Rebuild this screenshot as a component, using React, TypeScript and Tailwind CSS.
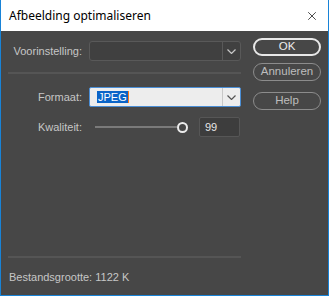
import { X } from 'lucide-react';

function Chevron({ color }: { color: string }) {
  return (
    <svg width="9" height="5" viewBox="0 0 9 5" fill="none">
      <path d="M0.5 0.5 L4.5 4.5 L8.5 0.5" stroke={color} strokeWidth="1.2" />
    </svg>
  );
}

function PillButton({ label, primary }: { label: string; primary?: boolean }) {
  return (
    <button
      className={
        primary
          ? 'w-[68px] h-[18px] rounded-[9px] border-2 border-[#e8e8e8] text-[#ececec] text-[11.5px] leading-none flex items-center justify-center'
          : 'w-[68px] h-[18px] rounded-[9px] border border-[#8c8c8c] text-[#bdbdbd] text-[11.5px] leading-none flex items-center justify-center'
      }
    >
      {label}
    </button>
  );
}

export default function App() {
  return (
    <div className="w-[329px] h-[296px] flex flex-col border-x border-b border-[#1883d7] bg-[#474747] font-['Liberation_Sans',sans-serif] text-[11px] text-[#c6c6c6]">
      {/* Titelbalk */}
      <div className="h-[31px] bg-white flex items-center justify-between pl-[8px] pr-[9px]">
        <span className="font-['Noto_Sans',sans-serif] text-[12px] text-black">Afbeelding optimaliseren</span>
        <X size={14} strokeWidth={1.2} className="text-black" />
      </div>

      {/* Inhoud */}
      <div className="flex-1 flex pl-[7px]">
        <div className="w-[233px] flex flex-col pt-[10px] pb-[10px]">
          <div className="flex items-center h-[20px]">
            <span className="w-[74px] text-right">Voorinstelling:</span>
            <div className="ml-[7px] flex-1 h-[20px] flex rounded-[3px] border border-[#595959] bg-[#404040]">
              <div className="flex-1" />
              <div className="w-[18px] border-l border-[#595959] flex items-center justify-center">
                <Chevron color="#c8c8c8" />
              </div>
            </div>
          </div>

          <div className="mt-[11px] h-[2px] bg-[#555555]" />

          <div className="mt-[13px] flex items-center h-[20px]">
            <span className="w-[74px] text-right">Formaat:</span>
            <div className="ml-[7px] flex-1 h-[20px] flex rounded-[2px] border border-[#4a8ed6] bg-[#ededed]">
              <div className="flex-1 flex items-center pl-[7px]">
                <span className="bg-[#0a64c8] text-white px-[1px] leading-[12px]">JPEG</span>
                <span className="w-[1px] h-[12px] bg-[#ff7a1a]" />
              </div>
              <div className="w-[18px] border-l border-[#c8c8c8] flex items-center justify-center">
                <Chevron color="#555555" />
              </div>
            </div>
          </div>

          <div className="mt-[10px] flex items-center h-[20px]">
            <span className="w-[74px] text-right">Kwaliteit:</span>
            <div className="ml-[13px] flex items-center">
              <div className="w-[82px] h-[2px] bg-[#7a7a7a]" />
              <div className="w-[11px] h-[11px] rounded-full border-2 border-[#ececec] bg-[#474747]" />
            </div>
            <div className="ml-[11px] w-[41px] h-[20px] rounded-[2px] border border-[#565656] bg-[#3d3d3d] flex items-center pl-[5px] text-[#e6e6e6]">
              99
            </div>
          </div>

          <div className="mt-auto h-[2px] bg-[#555555]" />
          <div className="mt-[11px] pl-[1px]">Bestandsgrootte: 1122 K</div>
        </div>

        <div className="ml-[12px] flex flex-col pt-[7px] gap-[7px]">
          <PillButton label="OK" primary />
          <PillButton label="Annuleren" />
          <div className="mt-[4px]">
            <PillButton label="Help" />
          </div>
        </div>
      </div>
    </div>
  );
}
